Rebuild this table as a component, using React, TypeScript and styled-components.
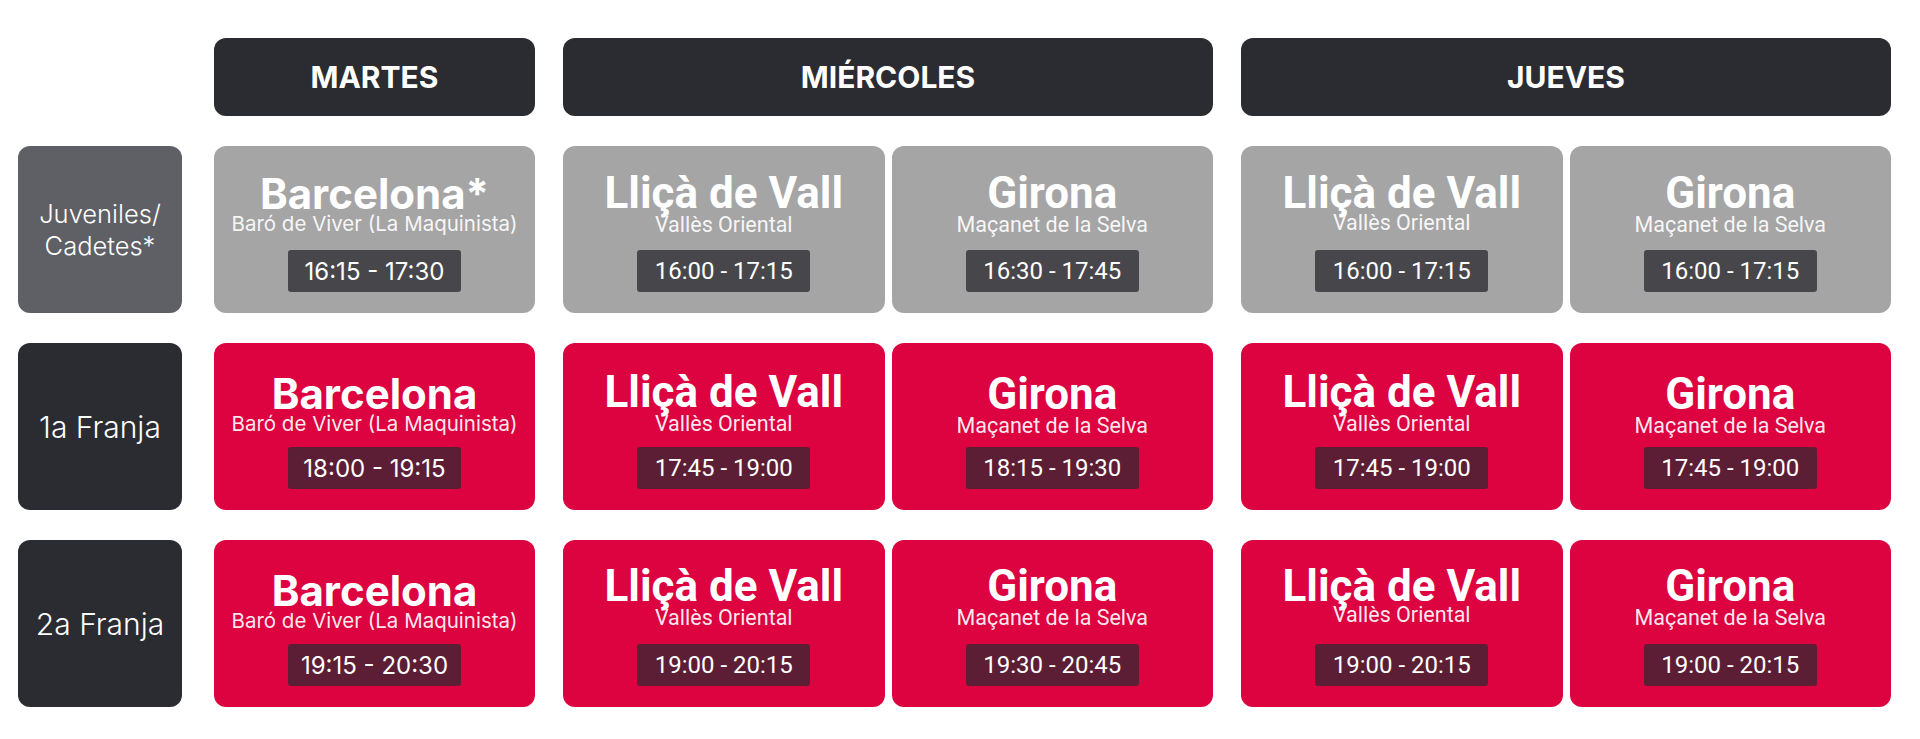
import React from 'react'
import styled, { createGlobalStyle } from 'styled-components'

const GlobalStyle = createGlobalStyle`
  html, body {
    margin: 0;
    padding: 0;
    background: #ffffff;
  }
  body {
    font-family: Inter, 'Noto Sans', sans-serif;
  }
`

type Family = 'inter' | 'roboto'
type Tone = 'grey' | 'red'

const fonts = {
  inter: "Inter, 'Noto Sans', sans-serif",
  roboto: "Roboto, 'Liberation Sans', sans-serif"
}

const Board = styled.div`
  display: grid;
  grid-template-columns: 168px 321px 650px 650px;
  grid-template-rows: 78px repeat(3, 167px);
  column-gap: 28px;
  row-gap: 30px;
  padding: 38px 0 32px 18px;
`

const Corner = styled.div``

const DayHeader = styled.div`
  background: #2b2c31;
  border-radius: 12px;
  color: #ffffff;
  display: flex;
  align-items: center;
  justify-content: center;
  font-family: Inter, sans-serif;
  font-weight: 700;
  font-size: 30px;
`

const RowLabel = styled.div<{ $muted?: boolean }>`
  width: 164px;
  border-radius: 12px;
  background: ${(p) => (p.$muted ? '#5f6065' : '#2b2c31')};
  color: #ffffff;
  display: flex;
  align-items: center;
  justify-content: center;
  text-align: center;
  font-family: Inter, sans-serif;
  font-size: ${(p) => (p.$muted ? '25.5px' : '30px')};
  line-height: 32px;
  font-weight: 300;
`

const Group = styled.div`
  display: flex;
  gap: 7px;
`

const Cell = styled.div<{ $tone: Tone; $family: Family; $drop: number }>`
  flex: 1;
  display: flex;
  flex-direction: column;
  align-items: center;
  box-sizing: border-box;
  padding: ${(p) => (p.$family === 'inter' ? 28 : 27) + p.$drop}px 0 21px;
  border-radius: 12px;
  background: ${(p) => (p.$tone === 'red' ? '#dc0340' : '#a5a5a5')};
  color: #ffffff;
  font-family: ${(p) => fonts[p.$family]};
`

const Title = styled.div<{ $family: Family }>`
  font-weight: 700;
  font-size: ${(p) => (p.$family === 'inter' ? '42px' : '44px')};
  line-height: 40px;
  white-space: nowrap;
`

const Sub = styled.div<{ $family: Family; $lift: number }>`
  font-size: ${(p) => (p.$family === 'inter' ? '20.5px' : '21.5px')};
  line-height: 22px;
  margin-top: ${(p) => (p.$family === 'inter' ? -1 : 1) - p.$lift}px;
  color: rgba(255, 255, 255, 0.92);
  white-space: nowrap;
`

const Time = styled.div<{ $tone: Tone }>`
  margin-top: auto;
  width: 173px;
  height: 42px;
  border-radius: 3px;
  background: ${(p) => (p.$tone === 'red' ? '#5b1e35' : '#47474b')};
  display: flex;
  align-items: center;
  justify-content: center;
  font-size: 24px;
  color: #ffffff;
`

type Slot = {
  title: string
  sub: string
  time: string
  drop?: number
  lift?: number
}

type Day = { name: string; family: Family; slots: Slot[][] }

const BCN = 'Baró de Viver (La Maquinista)'
const LLI = 'Vallès Oriental'
const GIR = 'Maçanet de la Selva'

const days: Day[] = [
  {
    name: 'MARTES',
    family: 'inter',
    slots: [
      [{ title: 'Barcelona*', sub: BCN, time: '16:15 - 17:30' }],
      [{ title: 'Barcelona', sub: BCN, time: '18:00 - 19:15', drop: 3 }],
      [{ title: 'Barcelona', sub: BCN, time: '19:15 - 20:30', drop: 3 }]
    ]
  },
  {
    name: 'MIÉRCOLES',
    family: 'roboto',
    slots: [
      [
        { title: 'Lliçà de Vall', sub: LLI, time: '16:00 - 17:15' },
        { title: 'Girona', sub: GIR, time: '16:30 - 17:45' }
      ],
      [
        { title: 'Lliçà de Vall', sub: LLI, time: '17:45 - 19:00', drop: 2 },
        { title: 'Girona', sub: GIR, time: '18:15 - 19:30', drop: 4 }
      ],
      [
        { title: 'Lliçà de Vall', sub: LLI, time: '19:00 - 20:15', drop: -1 },
        { title: 'Girona', sub: GIR, time: '19:30 - 20:45', drop: -1 }
      ]
    ]
  },
  {
    name: 'JUEVES',
    family: 'roboto',
    slots: [
      [
        { title: 'Lliçà de Vall', sub: LLI, time: '16:00 - 17:15', lift: 2 },
        { title: 'Girona', sub: GIR, time: '16:00 - 17:15' }
      ],
      [
        { title: 'Lliçà de Vall', sub: LLI, time: '17:45 - 19:00', drop: 2 },
        { title: 'Girona', sub: GIR, time: '17:45 - 19:00', drop: 4 }
      ],
      [
        { title: 'Lliçà de Vall', sub: LLI, time: '19:00 - 20:15', drop: -1, lift: 3 },
        { title: 'Girona', sub: GIR, time: '19:00 - 20:15', drop: -1 }
      ]
    ]
  }
]

const rows = [
  { label: ['Juveniles/', 'Cadetes*'], tone: 'grey' as Tone, muted: true },
  { label: ['1a Franja'], tone: 'red' as Tone, muted: false },
  { label: ['2a Franja'], tone: 'red' as Tone, muted: false }
]

const App = () => {
  return (
    <>
      <GlobalStyle />
      <Board>
        <Corner />
        {days.map((d) => (
          <DayHeader key={d.name}>{d.name}</DayHeader>
        ))}
        {rows.map((row, r) => (
          <React.Fragment key={r}>
            <RowLabel $muted={row.muted}>
              <div>
                {row.label.map((l) => (
                  <div key={l}>{l}</div>
                ))}
              </div>
            </RowLabel>
            {days.map((d) => (
              <Group key={d.name}>
                {d.slots[r].map((s, i) => (
                  <Cell key={i} $tone={row.tone} $family={d.family} $drop={s.drop || 0}>
                    <Title $family={d.family}>{s.title}</Title>
                    <Sub $family={d.family} $lift={s.lift || 0}>
                      {s.sub}
                    </Sub>
                    <Time $tone={row.tone}>{s.time}</Time>
                  </Cell>
                ))}
              </Group>
            ))}
          </React.Fragment>
        ))}
      </Board>
    </>
  )
}

export default App
